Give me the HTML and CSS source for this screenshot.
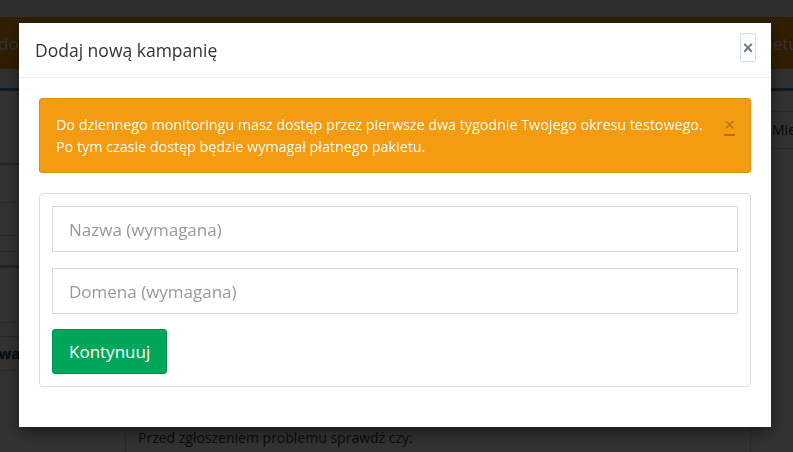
FILE: index.html
```html
<!DOCTYPE html>
<html lang="pl">
<head>
    <meta charset="UTF-8">
    <meta name="viewport" content="width=device-width, initial-scale=1.0">
    <title>Dodaj nową kampanię</title>
    <link rel="stylesheet" href="styles.css">
</head>
<body>

<div class="page">
    <div class="topbar"></div>
    <div class="trial-bar">
        <span class="trial-left">dostęp</span>
        <span class="trial-right">pakietu</span>
    </div>
    <div class="subnav"></div>

    <div class="page-body">
        <div class="side">
            <div class="side-row r1"></div>
            <div class="side-row r2"></div>
            <div class="side-row r3"></div>
            <div class="side-row r4"></div>
            <div class="side-row r5"></div>
            <div class="side-row r6"></div>
            <div class="side-row r7"></div>
            <div class="side-row title-row"><b>Nowa</b></div>
        </div>
        <div class="main">
            <div class="filter-row">
                <span class="filter-select">Miesiąc</span>
            </div>
            <div class="help-box">Przed zgłoszeniem problemu sprawdź czy:</div>
        </div>
    </div>
</div>

<div class="backdrop"></div>

<div class="modal">
    <div class="modal-header">
        <h4 class="modal-title">Dodaj nową kampanię</h4>
        <button type="button" class="close-modal">&times;</button>
    </div>
    <div class="modal-body">
        <div class="alert-warning">
            <p>Do dziennego monitoringu masz dostęp przez pierwsze dwa tygodnie Twojego okresu testowego.<br>
            Po tym czasie dostęp będzie wymagał płatnego pakietu.</p>
            <a class="alert-close">&times;</a>
        </div>

        <form id="campaignForm" class="form-box">
            <input type="text" name="name" placeholder="Nazwa (wymagana)">
            <input type="text" name="domain" placeholder="Domena (wymagana)">
            <button type="button" class="btn-success">Kontynuuj</button>
        </form>
    </div>
</div>

</body>
</html>
```

FILE: styles.css
```css
body {
    font-family: "Open Sans", Arial, sans-serif;
    margin: 0;
    background-color: #fff;
    color: #333;
    overflow: hidden;
    height: 452px;
}

/* page behind the modal */
.page {
    width: 793px;
    height: 452px;
    overflow: hidden;
}
.topbar {
    height: 17px;
    background: #ececec;
}
.trial-bar {
    height: 52px;
    background: #f39c12;
    color: #fff;
    font-size: 17px;
    display: flex;
    justify-content: space-between;
    align-items: center;
    white-space: nowrap;
    overflow: hidden;
}
.trial-left {
    margin-left: -2px;
}
.trial-right {
    margin-right: -6px;
}
.subnav {
    height: 19px;
    background: #f4f4f4;
    border-bottom: 3px solid #3c8dbc;
}
.page-body {
    display: flex;
}
.side {
    width: 125px;
}
.side-row {
    border-bottom: 1px solid #ccc;
}
.side-row.r1 {
    height: 72px;
    border-bottom: 2px solid #bbb;
}
.side-row.r2 {
    height: 37px;
}
.side-row.r3 {
    height: 32px;
}
.side-row.r4 {
    height: 15px;
}
.side-row.r5 {
    height: 13px;
    border-bottom: 3px solid #bbb;
}
.side-row.r6 {
    height: 54px;
}
.side-row.r7 {
    height: 13px;
}
.side-row.title-row {
    height: 33px;
    line-height: 33px;
    color: #1e3a5a;
    font-size: 15px;
    margin-left: -23px;
    white-space: nowrap;
}
.main {
    flex: 1;
    display: flex;
    flex-direction: column;
    overflow: hidden;
}
.filter-row {
    height: 322px;
    display: flex;
    justify-content: flex-end;
    padding-top: 20px;
    box-sizing: border-box;
}
.filter-select {
    box-sizing: border-box;
    width: 80px;
    height: 38px;
    line-height: 36px;
    margin-right: -55px;
    border: 1px solid #ccc;
    padding: 0 3px;
    font-size: 14px;
    white-space: nowrap;
    overflow: hidden;
}
.help-box {
    width: 600px;
    border-left: 1px solid #ccc;
    border-right: 1px solid #ccc;
    padding: 15px 12px 0;
    font-size: 14px;
    height: 40px;
}

.backdrop {
    position: fixed;
    top: 0;
    left: 0;
    width: 100%;
    height: 100%;
    background-color: rgba(0, 0, 0, 0.8);
}

/* modal */
.modal {
    position: absolute;
    top: 23px;
    left: 19px;
    width: 752px;
    background: #fff;
    box-shadow: 0 5px 15px rgba(0, 0, 0, 0.5);
}
.modal-header {
    display: flex;
    justify-content: space-between;
    align-items: center;
    height: 54px;
    padding: 0 15px 0 16px;
    border-bottom: 1px solid #f0f0f0;
}
.modal-title {
    margin: 0;
    font-size: 17.5px;
    font-weight: normal;
    color: #333;
}
.close-modal {
    width: 16px;
    height: 29px;
    padding: 0;
    margin-top: -5px;
    border: 1px solid #c9deff;
    border-radius: 2px;
    background: #fff;
    color: #777;
    font-size: 18px;
    font-weight: bold;
    line-height: 1;
    font-family: Arial, sans-serif;
    cursor: pointer;
}
.modal-body {
    padding: 20px 20px 40px;
}

.alert-warning {
    display: flex;
    justify-content: space-between;
    align-items: flex-start;
    background: #f39c12;
    border: 1px solid #e08e0b;
    border-radius: 3px;
    color: #fff;
    padding: 15px 15px 15px 16px;
    margin-bottom: 20px;
}
.alert-warning p {
    margin: 0;
    font-size: 14.3px;
    line-height: 21.5px;
}
.alert-close {
    color: #a0670c;
    font-size: 19px;
    line-height: 16px;
    margin-top: 3px;
    padding-bottom: 1px;
    border-bottom: 2px solid #a0670c;
    font-family: Arial, sans-serif;
    opacity: 0.8;
}

.form-box {
    display: flex;
    flex-direction: column;
    align-items: flex-start;
    gap: 16px;
    border: 1px solid #ddd;
    border-radius: 4px;
    padding: 12px;
}
.form-box input {
    width: 100%;
    height: 46px;
    box-sizing: border-box;
    padding: 10px 16px;
    border: 1px solid #d2d6de;
    font-family: "Open Sans", Arial, sans-serif;
    font-size: 17px;
    color: #555;
}
.form-box input::placeholder {
    color: #999;
}
.btn-success {
    height: 45px;
    margin-top: -1px;
    padding: 0 16px;
    background: #00a65a;
    border: 1px solid #008d4c;
    border-radius: 3px;
    color: #fff;
    font-family: "Open Sans", Arial, sans-serif;
    font-size: 17px;
    cursor: pointer;
}
```
